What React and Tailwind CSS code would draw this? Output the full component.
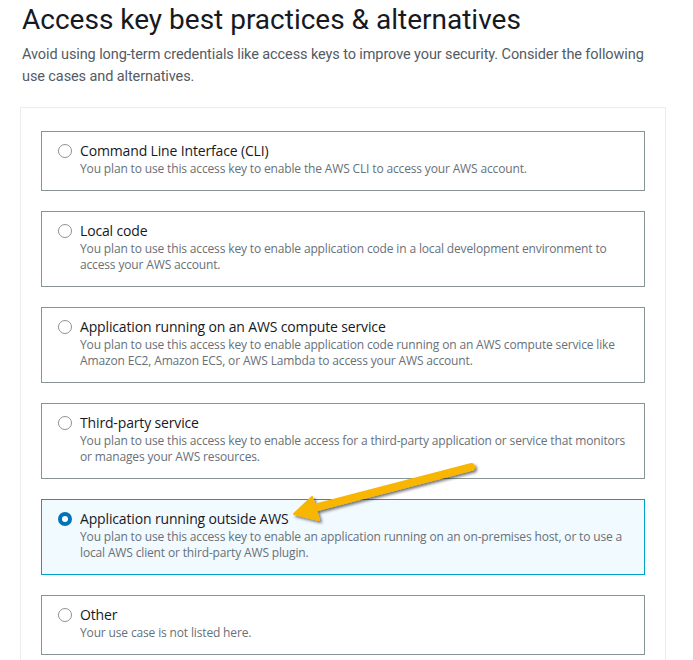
import React from "react";

const options = [
  {
    title: "Command Line Interface (CLI)",
    desc: ["You plan to use this access key to enable the AWS CLI to access your AWS account."],
  },
  {
    title: "Local code",
    desc: [
      "You plan to use this access key to enable application code in a local development environment to",
      "access your AWS account.",
    ],
  },
  {
    title: "Application running on an AWS compute service",
    desc: [
      "You plan to use this access key to enable application code running on an AWS compute service like",
      "Amazon EC2, Amazon ECS, or AWS Lambda to access your AWS account.",
    ],
  },
  {
    title: "Third-party service",
    desc: [
      "You plan to use this access key to enable access for a third-party application or service that monitors",
      "or manages your AWS resources.",
    ],
  },
  {
    title: "Application running outside AWS",
    desc: [
      "You plan to use this access key to enable an application running on an on-premises host, or to use a",
      "local AWS client or third-party AWS plugin.",
    ],
    selected: true,
  },
  {
    title: "Other",
    desc: ["Your use case is not listed here."],
  },
];

function Radio({ selected }) {
  if (selected) {
    return (
      <span className="mt-[3px] flex h-[14px] w-[14px] shrink-0 items-center justify-center rounded-full bg-[#0073bb]">
        <span className="h-[6px] w-[6px] rounded-full bg-white" />
      </span>
    );
  }
  return (
    <span className="mt-[3px] h-[14px] w-[14px] shrink-0 rounded-full border-[1.5px] border-[#8d9596] bg-white" />
  );
}

function Card({ title, desc, selected }) {
  return (
    <div
      className={
        selected
          ? "flex gap-[8px] border border-[#00a1c9] bg-[#f1faff] pl-[16px] pr-[12px] pt-[9px] pb-[13px]"
          : "flex gap-[8px] border border-[#879596] bg-white pl-[16px] pr-[12px] pt-[9px] pb-[13px]"
      }
    >
      <Radio selected={selected} />
      <div className="flex flex-col tracking-[-0.15px]">
        <div className="text-[14px] leading-[20px] text-[#16191f]">{title}</div>
        {desc.map((d, i) => (
          <div key={i} className="whitespace-nowrap text-[12px] leading-[16px] text-[#687078]">
            {d}
          </div>
        ))}
      </div>
    </div>
  );
}

export default function App() {
  return (
    <div
      className="relative h-[660px] w-[693px] overflow-hidden bg-white"
      style={{ fontFamily: '"Open Sans", "Noto Sans", sans-serif' }}
    >
      <div className="pl-[22px] pt-[2px]" style={{ fontFamily: 'Roboto, "Open Sans", sans-serif' }}>
        <h1 className="text-[28px] leading-[36px] text-[#16191f]">
          Access key best practices &amp; alternatives
        </h1>
        <div className="mt-[6px] text-[14.5px] leading-[22px] tracking-[-0.1px] text-[#545b64]">
          <div className="whitespace-nowrap">
            Avoid using long-term credentials like access keys to improve your security. Consider the following
          </div>
          <div className="whitespace-nowrap">use cases and alternatives.</div>
        </div>
      </div>
      <div className="ml-[20px] mt-[19px] flex w-[646px] flex-col gap-[20px] border border-b-0 border-[#eaeded] px-[20px] pt-[23px] pb-[20px]">
        {options.map((o) => (
          <Card key={o.title} {...o} />
        ))}
      </div>
      <svg className="pointer-events-none absolute left-0 top-0" width="693" height="660" viewBox="0 0 693 660">
        <defs>
          <filter id="sh" x="-20%" y="-50%" width="140%" height="200%">
            <feDropShadow dx="2" dy="2" stdDeviation="1.5" floodColor="#000" floodOpacity="0.55" />
          </filter>
        </defs>
        <g filter="url(#sh)">
          <line x1="471" y1="467" x2="306" y2="510" stroke="#f8b600" strokeWidth="8" strokeLinecap="round" />
          <polygon points="294,514 312,497 319,520" fill="#f8b600" stroke="#f8b600" strokeWidth="2" strokeLinejoin="round" />
        </g>
      </svg>
    </div>
  );
}
